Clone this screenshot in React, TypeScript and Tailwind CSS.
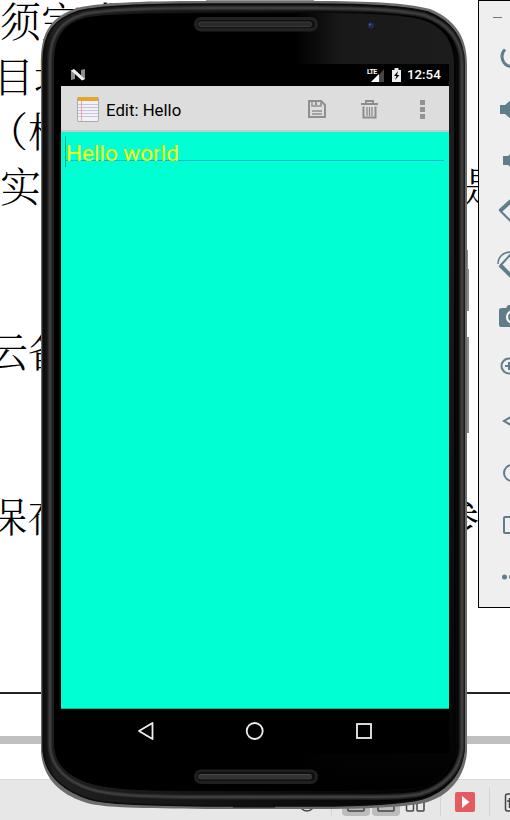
import React from "react";

const outer =
  "M41 62 C41 30 52 17 77 8 C98 3 135 1 206 1 H314 C370 1 407 3 430 9 C452 18 467 34 467 64 V752 C465 778 448 797 424 803 C403 807 370 809 314 809 H206 C140 808 106 808 87 803 C61 795 43 779 41 752 Z";
const rim =
  "M43 62 C43 32 55 19 79 11 C100 6 136 4 206 4 H314 C370 4 406 6 428 12 C448 20 464 36 464 64 V750 C462 775 445 792 422 799 C401 804 370 806 314 806 H206 C140 805 106 804 89 799 C65 791 45 776 43 750 Z";
const bevel =
  "M50 62 C50 33 62 21 84 14 C105 10 138 8 206 8 H314 C370 8 402 10 424 15 C448 23 462 40 462 64 V748 C460 771 444 787 420 794 C400 798 370 797 314 797 H206 C140 797 108 795 90 789 C68 782 51 768 50 746 Z";
const face =
  "M54 62 C54 34 66 22 88 17 C110 14 140 13 206 13 H314 C370 13 400 15 419 19 C443 25 454 42 454 64 V745 C454 768 440 783 418 788 C400 790 370 791 314 791 H206 C140 791 110 789 92 784 C68 777 54 765 54 742 Z";

function PhoneShell() {
  return (
    <svg className="absolute inset-0" width="510" height="820" viewBox="0 0 510 820">
      <defs>
        <linearGradient id="side" gradientUnits="userSpaceOnUse" x1="41" x2="467" y1="0" y2="0">
          <stop offset="0.006" stopColor="#0c0c0c" />
          <stop offset="0.03" stopColor="#202020" />
          <stop offset="0.965" stopColor="#000" />
          <stop offset="0.98" stopColor="#080808" />
          <stop offset="1" stopColor="#444" />
        </linearGradient>
        <linearGradient id="glass" gradientUnits="userSpaceOnUse" x1="54" x2="454" y1="0" y2="0">
          <stop offset="0.6" stopColor="#000" />
          <stop offset="0.72" stopColor="#191919" />
          <stop offset="1" stopColor="#1c1c1c" />
        </linearGradient>
        <linearGradient id="fade" x1="0" x2="0" y1="0" y2="1">
          <stop offset="0.3" stopColor="#000" stopOpacity="0" />
          <stop offset="0.93" stopColor="#000" stopOpacity="0.8" />
          <stop offset="1" stopColor="#000" />
        </linearGradient>
      </defs>
      <path d="M466 250h2v19h1v42h-3zM466 337h3v96h-3z" fill="#8a8a8a" />
      <path d="M206 .5h108" stroke="#999" />
      <path d={outer} fill="#6c6c6c" />
      <path d={rim} fill="url(#side)" stroke="#0c0c0c" strokeWidth="1.500" />
      <path d={bevel} fill="none" stroke="#1c1c1c" strokeWidth="6" />
      <path d={bevel} fill="none" stroke="#2c2c2c" strokeWidth="4" />
      <path d={bevel} fill="none" stroke="#3e3e3e" strokeWidth="2" />
      <path d={face} fill="url(#glass)" />
      <path d={face} fill="url(#fade)" />
      <path d="M233 806.5h42" stroke="#111" strokeWidth="2" />
      <rect x="194" y="17" width="124" height="14.500" rx="7.200" fill="#222" />
      <rect x="197" y="20" width="118" height="8" rx="4" fill="#111" />
      <rect x="198.500" y="22" width="113" height="4.500" rx="2.200" fill="#292929" stroke="#484848" strokeWidth=".7" />
      <rect x="194" y="769.500" width="124" height="14.500" rx="7.200" fill="#202020" />
      <rect x="197" y="772" width="118" height="9" rx="4" fill="#101010" />
      <rect x="198" y="774" width="114" height="5.500" rx="2" fill="#333" />
      <path d="M200 774.500h110" stroke="#484848" />
      <circle cx="371" cy="25.500" r="5" fill="#161a28" />
      <circle cx="371" cy="25.500" r="3" fill="#202b50" />
      <circle cx="370" cy="24.500" r="1.200" fill="#40558a" />
    </svg>
  );
}

function Line({ className, children }: { className: string; children: React.ReactNode }) {
  return <div className={"flex h-[55px] shrink-0 items-center whitespace-pre " + className}>{children}</div>;
}

function Document() {
  return (
    <div className="flex h-full flex-col overflow-hidden bg-white text-black">
      <div className="-mt-[8px] flex h-[702px] shrink-0 flex-col border-b-2 border-[#222] font-['Noto_Serif_CJK_SC','Noto_Sans_CJK_SC',serif] text-[41px] font-light leading-[55px]">
        <Line className="">须完成</Line>
        <Line className="-ml-[7px]">目地</Line>
        <Line className="-ml-[13px]">（根</Line>
        <Line className="justify-between pr-[7px]"><span>实</span><span>是</span></Line>
        <Line className=""> </Line>
        <Line className=""> </Line>
        <Line className="-ml-[13px]">云备</Line>
        <Line className=""> </Line>
        <Line className=""> </Line>
        <Line className="-ml-[14px] justify-between pr-[31px]"><span>保存</span><span>参</span></Line>
      </div>
      <div className="mt-[42px] h-2 shrink-0 bg-[#c0c0c0]" />
      <div className="mt-[35px] flex h-[41px] shrink-0 items-center border-t border-[#d8d8d8] bg-[#e7e7e7]">
        <svg width="510" height="41" viewBox="0 779 510 41" fill="none">
          <path d="M331.500 786v29M440.500 786v29M489.500 786v29" stroke="#d4d4d4" />
          <rect x="342" y="788" width="28" height="27" rx="4" fill="#bcbcbc" />
          <rect x="372" y="788" width="28" height="27" rx="4" fill="#bcbcbc" />
          <g stroke="#444" strokeWidth="1.500">
            <circle cx="307" cy="802.500" r="7.500" />
            <rect x="348" y="794" width="16" height="16" rx="1" />
            <rect x="378" y="794" width="16" height="16" rx="1" />
            <rect x="406.500" y="796" width="7" height="14" rx="1" />
            <rect x="417" y="796" width="7" height="14" rx="1" />
            <rect x="505.500" y="793" width="17" height="17" rx="2" />
            <path d="M509.500 797v10M507 800h3" />
          </g>
          <rect x="455" y="791" width="20" height="20" rx="2" fill="#e45a5e" />
          <path d="M462 795l7.500 6-7.500 6z" fill="#fff" />
        </svg>
      </div>
    </div>
  );
}

function AppBar() {
  return (
    <div className="flex h-[46px] shrink-0 items-center border-b-2 border-[#c9c9c9] bg-[#ddd]">
      <svg className="ml-4 mt-[2px] shrink-0" width="22" height="27" viewBox="0 0 22 27">
        <rect x="0" y="1" width="22" height="25" rx="2" fill="#aaa" />
        <rect x="1" y="2" width="20" height="23" rx="1" fill="#f2f2f5" />
        <path d="M1 1h20v4H1z" fill="#e6a52d" />
        <path d="M1 8.500h20M1 11.500h20M1 14.500h20M1 17.500h20M1 20.500h20" stroke="#c4c4e6" />
        <path d="M4.500 5v20" stroke="#e9a4ac" />
      </svg>
      <span className="ml-[7px] mt-[3px] w-[202px] text-[16.800px] leading-5 text-black">Edit: Hello</span>
      <svg className="mt-[2px] shrink-0" width="18" height="18" viewBox="0 0 18 18" fill="none" stroke="#8f8f8f" strokeWidth="2">
        <path d="M1 1h12l4 4v12H1z" />
        <path d="M4 1v5h9V1" strokeWidth="1.500" />
        <path d="M7 1h2v4H7z" fill="#8f8f8f" stroke="none" />
        <path d="M4 11h10M4 14h10" strokeWidth="1.300" />
      </svg>
      <svg className="ml-[35px] mt-[2px] shrink-0" width="17" height="19" viewBox="0 0 17 19" fill="none" stroke="#8d8d8d">
        <path d="M0 4h17M5 4V1h7v3" strokeWidth="1.900" />
        <path d="M2.500 6.500v11h12v-11" strokeWidth="2" />
        <path d="M6 7v9M8.500 7v9M11 7v9" strokeWidth="1.300" />
      </svg>
      <svg className="ml-[42px] mt-[2px] shrink-0" width="5" height="19" viewBox="0 0 5 19">
        <path d="M0 0h5v5H0zM0 7h5v5H0zM0 14h5v5H0z" fill="#929292" />
      </svg>
    </div>
  );
}

function Screen() {
  return (
    <div className="absolute left-[61px] top-[64px] flex h-[690px] w-[388px] flex-col bg-black">
      <div className="flex h-[22px] shrink-0 items-center text-white">
        <svg className="ml-[10px]" width="14" height="12" viewBox="0 0 14 12">
          <path d="M0 1v10l4-1V1zM10 1l4-1v10l-4 1z" fill="#8c8c8c" />
          <path d="M0 1.500L3 0l11 10-3 1.500z" fill="#eee" />
        </svg>
        <div className="ml-[282px] flex h-[15px] w-[17px] items-start">
          <span className="w-[10px] text-[7px] font-bold leading-[8px] tracking-[-0.5px]">LTE</span>
          <svg className="-ml-[6px] shrink-0" width="13" height="15" viewBox="0 0 13 15">
            <path d="M13 1v13H0L6 8V8h1z" fill="#444" />
            <path d="M8 6v8H0z" fill="#fff" />
          </svg>
        </div>
        <svg className="ml-[8px] mr-[6px]" width="9" height="14" viewBox="0 0 9 14">
          <path d="M0 2h2.500V0h4v2H9v12H0z" fill="#eee" />
          <path d="M6 3L2 8h2.500L3 12l4.500-5H5z" fill="#000" />
        </svg>
        <span className="w-[37px] text-[13.300px] font-medium leading-none">12:54</span>
      </div>
      <AppBar />
      <div className="flex min-h-0 flex-1 border-b border-[#00bd96] bg-[#00ffd2] px-[5px] pt-1">
        <div className="relative flex h-[25px] w-full items-center border-b border-[#00b9d8] text-[22.500px] leading-[30px] text-[#ffff00]">
          <span className="mt-[9px]">Hello world</span>
          <span className="absolute -left-px top-0 h-[31px] w-px bg-[#00a994]" />
        </div>
      </div>
      <div className="flex h-[45px] shrink-0 items-center">
        <svg width="388" height="45" viewBox="61 709 388 45" fill="none" stroke="#eee" strokeWidth="1.800">
          <path d="M139 731l13.500-8v16z" strokeLinejoin="round" />
          <circle cx="254.700" cy="731" r="8" />
          <rect x="357" y="724" width="14" height="14" />
        </svg>
      </div>
    </div>
  );
}

function EmulatorTools() {
  return (
    <div className="absolute left-[478px] top-0 h-[608px] w-[60px] border border-black bg-[#efefef]">
      <svg width="58" height="606" viewBox="479 1 58 606" fill="none" stroke="#607d8b" strokeWidth="2">
        <path d="M493 17.500h9" strokeWidth="1" />
        <path d="M505 49.500a10 10 0 0 0 6 17" strokeWidth="3" />
        <path d="M500 105h5l7-6v21l-7-6h-5z" fill="#607d8b" stroke="none" />
        <path d="M503 156h5l7-6v21l-7-6h-5z" fill="#607d8b" stroke="none" />
        <path d="M511 201l-11 10" strokeWidth="4" />
        <path d="M499.500 210l12 12" strokeWidth="2" />
        <path d="M511 254l-11 12" strokeWidth="2" />
        <path d="M500 265l12 12" strokeWidth="4" />
        <path d="M498 264c0-7 5-12 13-12" strokeWidth="1.500" />
        <path d="M499 310q0-2 3-2h4l2-3h20v22h-27q-2 0-2-2z" fill="#607d8b" stroke="none" />
        <circle cx="513" cy="317" r="6" stroke="#fff" />
        <circle cx="509" cy="366" r="7.500" />
        <path d="M505 366h8M509 362v8" />
        <path d="M516 414l-12 7 12 7" />
        <circle cx="512" cy="473" r="8" />
        <rect x="504" y="517" width="16" height="16" rx="1" />
        <circle cx="504.500" cy="577" r="2.500" fill="#607d8b" stroke="none" />
        <circle cx="511.500" cy="577" r="2.500" fill="#607d8b" stroke="none" />
      </svg>
    </div>
  );
}

export default function App() {
  return (
    <div className="relative h-[820px] w-[510px] overflow-hidden font-['Roboto','Noto_Sans_CJK_SC',sans-serif]">
      <Document />
      <PhoneShell />
      <Screen />
      <EmulatorTools />
    </div>
  );
}
